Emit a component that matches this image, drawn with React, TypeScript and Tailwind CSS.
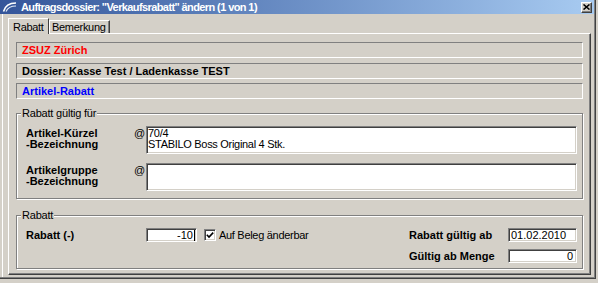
import React from 'react';

const sunkenField =
  'bg-white border-t border-l border-r border-b border-t-[#808080] border-l-[#808080] border-r-white border-b-white shadow-[inset_1px_1px_0_#404040,inset_-1px_-1px_0_#d4d0c8]';

const labelBox =
  'h-[16px] w-[567px] flex items-center pl-[5px] font-bold leading-[12px] border-t border-l border-r border-b border-t-[#808080] border-l-[#808080] border-r-white border-b-white';

const groupBox =
  'w-[567px] border border-[#808080] shadow-[inset_1px_1px_0_#fff,1px_1px_0_#fff]';

const TitleIcon = () => (
  <svg width="16" height="12" viewBox="0 0 16 12" className="ml-[2px] shrink-0">
    <path d="M1.5 10.5 C 3 5, 7 2, 14 2" stroke="#fff" strokeWidth="1.6" fill="none" />
    <path d="M4 10.5 C 5.5 7, 9 5, 14 5" stroke="#dfe8f6" strokeWidth="1.2" fill="none" />
  </svg>
);

const CloseButton = () => (
  <div className="ml-auto mr-[2px] w-[11px] h-[11px] bg-[#d4d0c8] flex items-center justify-center border-t border-l border-r border-b border-t-white border-l-white border-r-[#404040] border-b-[#404040] shadow-[inset_-1px_-1px_0_#808080]">
    <svg width="7" height="6" viewBox="0 0 7 6">
      <path d="M0.5 0.5 L6.5 5.5 M6.5 0.5 L0.5 5.5" stroke="#000" strokeWidth="1.6" />
    </svg>
  </div>
);

const FieldLabel = ({ lines }: { lines: string[] }) => (
  <div className="w-[108px] pt-[2px] leading-[11px] font-bold">
    {lines.map((l) => (
      <div key={l}>{l}</div>
    ))}
  </div>
);

export default function App() {
  return (
    <div className="w-[598px] h-[283px] bg-[#d4d0c8] overflow-hidden text-[11px] leading-[12px] text-black font-['Liberation_Sans',Arial,sans-serif]">
      <div className="w-[596px] h-[279px] flex flex-col border-r border-b border-r-[#404040] border-b-[#404040]">
        <div className="flex-1 flex flex-col border-r border-b border-r-[#808080] border-b-[#808080]">
          {/* Title bar */}
          <div className="h-[14px] flex items-center bg-linear-to-r from-[#34559a] to-[#a8cbf1]">
            <TitleIcon />
            <span className="ml-[3px] text-white font-bold leading-[14px] tracking-[-0.6px] whitespace-nowrap">
              Auftragsdossier: "Verkaufsrabatt" ändern (1 von 1)
            </span>
            <CloseButton />
          </div>

          {/* Body */}
          <div className="flex-1 ml-[2px] border-l border-l-white pl-[5px] pt-[4px] pb-[2px] flex flex-col">
            {/* Tabs */}
            <div className="h-[15px] flex items-end tracking-[-0.3px]">
              <div className="relative z-10 h-[16px] -mb-px w-[41px] pl-[4px] flex items-center bg-[#d4d0c8] border-t border-l border-r border-t-white border-l-white border-r-[#404040]">
                Rabatt
              </div>
              <div className="h-[13px] w-[61px] pl-[2px] flex items-center border-t border-l border-r border-t-white border-l-white border-r-[#404040] shadow-[inset_-1px_0_0_#808080]">
                Bemerkung
              </div>
            </div>

            {/* Tab panel */}
            <div className="flex-1 w-[583px] pt-[8px] pl-[7px] border-t border-l border-r border-b border-t-white border-l-white border-r-[#404040] border-b-[#404040] shadow-[inset_-1px_-1px_0_#808080]">
              <div className={`${labelBox} text-[#ff0000]`}>ZSUZ Zürich</div>
              <div className={`${labelBox} mt-[5px]`}>Dossier: Kasse Test / Ladenkasse TEST</div>
              <div className={`${labelBox} mt-[4px] text-[#0000ff]`}>Artikel-Rabatt</div>

              {/* Rabatt gültig für */}
              <fieldset className={`${groupBox} mt-[9px] pl-[9px] pr-[5px] pt-[8px] pb-[7px]`}>
                <legend className="-ml-[5px] px-[1px] leading-[10px] bg-[#d4d0c8] tracking-[-0.2px]">
                  Rabatt gültig für
                </legend>
                <div className="flex h-[28px]">
                  <FieldLabel lines={['Artikel-Kürzel', '-Bezeichnung']} />
                  <div className="w-[12px] pt-[2px] leading-[11px]">@</div>
                  <div className={`${sunkenField} w-[431px] h-[28px] pl-[1px] pt-[1px] leading-[11px] tracking-[-0.3px]`}>
                    <div>70/4</div>
                    <div>STABILO Boss Original 4 Stk.</div>
                  </div>
                </div>
                <div className="flex h-[28px] mt-[9px]">
                  <FieldLabel lines={['Artikelgruppe', '-Bezeichnung']} />
                  <div className="w-[12px] pt-[2px] leading-[11px]">@</div>
                  <div className={`${sunkenField} w-[431px] h-[28px]`} />
                </div>
              </fieldset>

              {/* Rabatt */}
              <fieldset className={`${groupBox} mt-[11px] pl-[9px] pr-[5px] pt-[8px] pb-[5px]`}>
                <legend className="-ml-[5px] px-[1px] leading-[10px] bg-[#d4d0c8] tracking-[-0.2px]">
                  Rabatt
                </legend>
                <div className="flex items-start">
                  <div className="flex items-center h-[14px]">
                    <div className="w-[120px] font-bold">Rabatt (-)</div>
                    <div className={`${sunkenField} w-[51px] h-[14px] flex items-center justify-end pr-[1px]`}>
                      <span>-10</span>
                      <span className="ml-[1px] w-px h-[11px] bg-black" />
                    </div>
                    <div className={`${sunkenField} ml-[7px] w-[12px] h-[12px] flex items-center justify-center`}>
                      <svg width="8" height="8" viewBox="0 0 8 8">
                        <path d="M0.8 3.8 L3 6 L7.2 1.6" stroke="#000" strokeWidth="1.6" fill="none" />
                      </svg>
                    </div>
                    <div className="ml-[3px] tracking-[-0.3px]">Auf Beleg änderbar</div>
                  </div>

                  <div className="ml-auto grid grid-cols-[99px_69px] grid-rows-[14px_14px] gap-y-[7px] items-center">
                    <div className="font-bold">Rabatt gültig ab</div>
                    <div className={`${sunkenField} h-[14px] flex items-center pl-[2px]`}>01.02.2010</div>
                    <div className="font-bold">Gültig ab Menge</div>
                    <div className={`${sunkenField} h-[14px] flex items-center justify-end pr-[3px]`}>0</div>
                  </div>
                </div>
              </fieldset>
            </div>
          </div>
        </div>
      </div>
    </div>
  );
}
